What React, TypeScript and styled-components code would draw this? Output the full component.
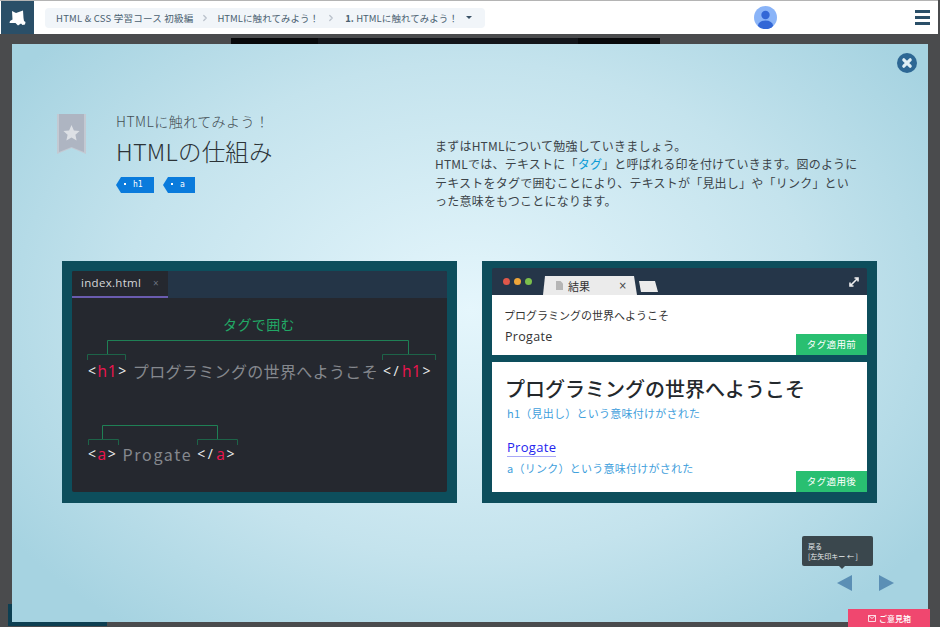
import React from "react";
import styled, { createGlobalStyle } from "styled-components";
import { ChevronRight } from "lucide-react";

const jpStack = `"Noto Sans CJK JP", "Noto Sans", sans-serif`;

const GlobalStyle = createGlobalStyle`
  html, body {
    margin: 0;
    padding: 0;
    background: #4a4b4d;
  }
  * {
    box-sizing: border-box;
  }
`;

const Page = styled.div`
  position: relative;
  width: 940px;
  height: 627px;
  overflow: hidden;
  display: flex;
  flex-direction: column;
  font-family: ${jpStack};
  background: #4a4b4d;
`;

const Header = styled.header`
  flex: 0 0 34px;
  display: flex;
  align-items: center;
  background: #fff;
  border-top: 1px solid #b4b4b4;
  margin-right: 2px;
  padding-left: 1px;
`;

const LogoBox = styled.div`
  width: 33px;
  height: 33px;
  background: #2a4f68;
  display: flex;
  align-items: center;
  justify-content: center;
`;

const Breadcrumb = styled.nav`
  margin-left: 11px;
  width: 440px;
  height: 20px;
  background: #f1f5f9;
  border-radius: 4px;
  display: flex;
  align-items: center;
  padding-left: 11px;
  font-size: 9.5px;
  color: #4a5f70;
  white-space: nowrap;
`;

const Crumb = styled.span<{ $spacing: number }>`
  letter-spacing: ${({ $spacing }) => $spacing}px;
`;

const CrumbNumber = styled.b`
  font-weight: 700;
`;

const CrumbSeparator = styled.span<{ $right: number }>`
  display: flex;
  margin: 0 ${({ $right }) => $right}px 0 7px;
  color: #b9c1cb;
`;

const Caret = styled.span`
  margin-left: 8px;
  width: 0;
  height: 0;
  border-left: 3px solid transparent;
  border-right: 3px solid transparent;
  border-top: 3px solid #3a5266;
`;

const HeaderSpacer = styled.div`
  flex: 1;
`;

const AvatarIcon = styled.svg`
  width: 23px;
  height: 23px;
  margin-right: 138px;
`;

const Hamburger = styled.div`
  display: flex;
  flex-direction: column;
  gap: 3px;
  width: 15px;
  margin-right: 8px;
  span {
    height: 3px;
    background: #2a4f68;
  }
`;

const Backdrop = styled.div`
  flex: 1;
  position: relative;
  padding: 10px 12px 5px 12px;
  background: #4a4b4d;
`;

const GhostVideo = styled.div`
  position: absolute;
  left: 231px;
  top: 4px;
  width: 429px;
  height: 6px;
  background: linear-gradient(90deg, #08090b 0 87px, #14161b 87px 347px, #08090b 347px);
`;

const GhostBar = styled.div`
  position: absolute;
  left: 8px;
  bottom: 1px;
  width: 99px;
  height: 22px;
  background: #0d3f52;
`;

const Modal = styled.main`
  position: relative;
  height: 100%;
  padding: 70px 50px 0 45px;
  background: radial-gradient(ellipse 560px 400px at 50% 46%, #e5f6fc 0%, #c4e3ed 62%, #a6d3e1 100%);
`;

const Intro = styled.section`
  height: 147px;
  display: flex;
`;

const Ribbon = styled.svg`
  flex: 0 0 29px;
  width: 29px;
  height: 40px;
`;

const TitleBlock = styled.div`
  width: 319px;
  margin-left: 30px;
`;

const Subtitle = styled.div`
  font-size: 14px;
  line-height: 16px;
  margin-top: -1px;
  letter-spacing: 0.45px;
  color: #444f55;
  font-weight: 300;
`;

const Title = styled.h1`
  margin: 7px 0 0;
  font-size: 23.5px;
  line-height: 30px;
  letter-spacing: 0.2px;
  font-weight: 300;
  color: #2c3337;
`;

const TagRow = styled.div`
  display: flex;
  gap: 9px;
  margin-top: 11px;
`;

const Tag = styled.span<{ $width: number }>`
  width: ${({ $width }) => $width}px;
  height: 16px;
  background: #0a7bdc;
  clip-path: polygon(5px 0, 100% 0, 100% 100%, 5px 100%, 0 50%);
  color: #fff;
  font-size: 8px;
  line-height: 16px;
  font-family: "DejaVu Sans Mono", monospace;
  padding-left: 8px;
  white-space: pre;
`;

const TagDot = styled.i`
  display: inline-block;
  width: 2px;
  height: 2px;
  margin: 0 7px 2px 0;
  background: #fff;
`;

const Description = styled.p`
  margin: 23px 0 0;
  width: 430px;
  font-size: 12px;
  line-height: 18.4px;
  letter-spacing: 0.22px;
  color: #3c4449;
`;

const Highlight = styled.span`
  color: #0a9bd6;
`;

const Panels = styled.section`
  display: flex;
  gap: 25px;
  margin-left: 5px;
`;

const Panel = styled.div<{ $top: number }>`
  flex: 0 0 395px;
  height: 242px;
  background: #0d4e5c;
  padding: ${({ $top }) => $top}px 10px 11px;
  display: flex;
  flex-direction: column;
`;

const Editor = styled.div`
  flex: 1;
  background: #25282f;
  display: flex;
  flex-direction: column;
  border-radius: 2px;
  overflow: hidden;
`;

const EditorTabs = styled.div`
  height: 27px;
  background: #243547;
  display: flex;
`;

const EditorTab = styled.div`
  width: 96px;
  background: #25282f;
  border-bottom: 2px solid #6a5cb0;
  display: flex;
  align-items: center;
  justify-content: space-between;
  padding: 0 9px 2px 9px;
  font-family: "Open Sans", sans-serif;
  font-size: 11.5px;
  letter-spacing: 0.3px;
  color: #d5d7da;
  span {
    color: #6b7280;
    font-size: 10px;
  }
`;

const EditorBody = styled.div`
  flex: 1;
  padding-top: 17px;
`;

const GreenCaption = styled.div`
  text-align: center;
  font-size: 14px;
  line-height: 18px;
  color: #22a866;
  letter-spacing: 0.4px;
  margin-right: 1px;
`;

const Brackets = styled.svg`
  display: block;
  width: 375px;
  height: 30px;
`;

const CodeLine = styled.div<{ $mt: number; $mb?: number }>`
  display: flex;
  align-items: center;
  height: 22px;
  padding-left: 16px;
  font-family: "Open Sans", sans-serif;
  font-size: 15px;
  line-height: 22px;
  white-space: nowrap;
  margin-top: ${({ $mt }) => $mt}px;
  margin-bottom: ${({ $mb }) => $mb || 0}px;
`;

const Angle = styled.span<{ $spacing?: number }>`
  color: #eeeeee;
  font-size: 14px;
  letter-spacing: ${({ $spacing }) => $spacing ?? 0.6}px;
`;

const TagName = styled.span`
  color: #f01450;
  font-size: 15.5px;
  letter-spacing: 0.6px;
  margin: 0 1px;
`;

const CodeText = styled.span<{ $ml: number; $mr: number; $spacing: number }>`
  color: #85888e;
  font-family: ${jpStack};
  font-size: 16px;
  margin-left: ${({ $ml }) => $ml}px;
  margin-right: ${({ $mr }) => $mr}px;
  letter-spacing: ${({ $spacing }) => $spacing}px;
`;

const BrowserBar = styled.div`
  flex: 0 0 27px;
  background: #253649;
  display: flex;
  align-items: flex-end;
  border-radius: 2px 2px 0 0;
  position: relative;
`;

const Dots = styled.div`
  display: flex;
  gap: 4px;
  margin: 0 0 10px 11px;
`;

const Dot = styled.i<{ $color: string }>`
  width: 7px;
  height: 7px;
  border-radius: 50%;
  background: ${({ $color }) => $color};
`;

const BrowserTab = styled.div`
  width: 94px;
  height: 19px;
  margin-left: 11px;
  background: #ebebeb;
  clip-path: polygon(2px 0, 91px 0, 94px 100%, 0 100%);
  display: flex;
  align-items: center;
  padding: 0 10px 0 13px;
  font-size: 11px;
  color: #333;
`;

const TabTitle = styled.span`
  margin-left: 5px;
  flex: 1;
`;

const TabClose = styled.span`
  font-size: 10px;
  font-family: "DejaVu Sans", sans-serif;
  color: #444;
`;

const NewTab = styled.div`
  width: 20px;
  height: 11px;
  margin: 0 0 3px 1px;
  background: #ebebeb;
  clip-path: polygon(1px 0, 17px 0, 20px 100%, 3px 100%);
`;

const ExpandIcon = styled.svg`
  position: absolute;
  right: 8px;
  top: 9px;
  width: 10px;
  height: 10px;
`;

const Result = styled.div<{ $height: number; $pad: string }>`
  position: relative;
  height: ${({ $height }) => $height}px;
  background: #fff;
  padding: ${({ $pad }) => $pad};
`;

const ResultGap = styled.div`
  flex: 0 0 7px;
`;

const PlainLine = styled.div`
  font-size: 11px;
  line-height: 16px;
  color: #333;
`;

const PlainLink = styled.div`
  margin: 6px 0 0 1px;
  font-family: "Open Sans", sans-serif;
  font-size: 12.5px;
  line-height: 16px;
  letter-spacing: 0.3px;
  color: #333;
`;

const ResultHeading = styled.div`
  font-size: 20px;
  line-height: 28px;
  font-weight: 500;
  color: #23282c;
`;

const Meaning = styled.div<{ $mt: number }>`
  margin: ${({ $mt }) => $mt}px 0 0 2px;
  font-size: 11px;
  line-height: 14px;
  letter-spacing: 0.25px;
  color: #3fa0dc;
`;

const ResultLink = styled.a`
  display: inline-block;
  margin: 18px 0 0 2px;
  font-family: "Open Sans", sans-serif;
  font-size: 13px;
  line-height: 18px;
  letter-spacing: 0.3px;
  color: #2424ee;
  border-bottom: 1px solid #a9a9f7;
`;

const StateLabel = styled.div`
  position: absolute;
  right: 0;
  bottom: 0;
  width: 71px;
  height: 21px;
  background: #29bf71;
  color: #fff;
  font-size: 9.5px;
  line-height: 21px;
  text-align: center;
  letter-spacing: 0.4px;
`;

const CloseButton = styled.svg`
  position: absolute;
  right: 11px;
  top: 9px;
  width: 20px;
  height: 20px;
`;

const Tooltip = styled.div`
  position: absolute;
  left: 802px;
  top: 502px;
  width: 71px;
  height: 30px;
  border-radius: 2px;
  background: #3a474d;
  color: #e8ecee;
  font-size: 7px;
  line-height: 10px;
  padding: 5px 6px;
  white-space: nowrap;
  &::after {
    content: "";
    position: absolute;
    left: 37px;
    bottom: -3px;
    border-left: 3px solid transparent;
    border-right: 3px solid transparent;
    border-top: 3px solid #3a474d;
  }
`;

const Arrow = styled.i<{ $left: number; $dir: "left" | "right" }>`
  position: absolute;
  left: ${({ $left }) => $left}px;
  top: 541px;
  width: 0;
  height: 0;
  border-top: 8px solid transparent;
  border-bottom: 8px solid transparent;
  ${({ $dir }) =>
    $dir === "left" ? "border-right: 15px solid #5b8fb5;" : "border-left: 15px solid #5b8fb5;"}
`;

const Feedback = styled.div`
  position: absolute;
  right: 10px;
  bottom: 0;
  width: 82px;
  height: 18px;
  background: #f0476f;
  color: #fff;
  font-size: 8px;
  font-weight: 500;
  display: flex;
  align-items: center;
  justify-content: center;
  gap: 3px;
  padding-left: 1px;
`;

const MailIcon = styled.svg`
  width: 8px;
  height: 7px;
`;

// outer span brighter, small tag brackets a bit darker
const BracketPaths: React.FC<{ outer: string; inner: string }> = ({ outer, inner }) => (
  <>
    <path d={outer} fill="none" stroke="#1f8055" strokeWidth="1" />
    <path d={inner} fill="none" stroke="#1d6348" strokeWidth="1" />
  </>
);

const App: React.FC = () => {
  return (
    <Page>
      <GlobalStyle />
      <Header>
        <LogoBox>
          <svg width="17" height="16" viewBox="0 0 17 16">
            <path
              d="M3 1 L7 3 L14 0.5 L14.5 8 L15 11 L16.5 12 L16 14.5 L13.5 15 L12 13.5 L9 15.5 L6.5 13 L0.5 13 L1 11 L3.5 9.5 Z"
              fill="#fff"
            />
          </svg>
        </LogoBox>
        <Breadcrumb>
          <Crumb $spacing={0.22}>HTML &amp; CSS 学習コース 初級編</Crumb>
          <CrumbSeparator $right={7}>
            <ChevronRight size={10} strokeWidth={3} />
          </CrumbSeparator>
          <Crumb $spacing={0.05}>HTMLに触れてみよう！</Crumb>
          <CrumbSeparator $right={9}>
            <ChevronRight size={10} strokeWidth={3} />
          </CrumbSeparator>
          <Crumb $spacing={0.05}>
            <CrumbNumber>1.</CrumbNumber> HTMLに触れてみよう！
          </Crumb>
          <Caret />
        </Breadcrumb>
        <HeaderSpacer />
        <AvatarIcon viewBox="0 0 23 23">
          <defs>
            <clipPath id="avatar-clip">
              <circle cx="11.5" cy="11.5" r="11.5" />
            </clipPath>
          </defs>
          <circle cx="11.5" cy="11.5" r="11.5" fill="#8ab4f8" />
          <circle cx="11.5" cy="9" r="4.2" fill="#3367d6" />
          <ellipse cx="11.5" cy="19.5" rx="7.5" ry="5" fill="#3367d6" clipPath="url(#avatar-clip)" />
        </AvatarIcon>
        <Hamburger>
          <span />
          <span />
          <span />
        </Hamburger>
      </Header>

      <Backdrop>
        <GhostVideo />
        <GhostBar />
        <Modal>
          <CloseButton viewBox="0 0 20 20">
            <circle cx="10" cy="10" r="10" fill="#2d6794" />
            <path d="M6.8 6.8 L13.2 13.2 M13.2 6.8 L6.8 13.2" stroke="#dfeef5" strokeWidth="3.2" strokeLinecap="round" />
          </CloseButton>

          <Intro>
            <Ribbon viewBox="0 0 29 40">
              <path d="M0 0 H29 V40 L14.5 34 L0 40 Z" fill="#c3c9d2" />
              <path d="M2 0 H27 V38 L14.5 33 L2 38 Z" fill="#aeb5c2" />
              <path
                d="M14.5 11 L16.9 16.4 L22.6 17 L18.4 20.8 L19.6 26.5 L14.5 23.6 L9.4 26.5 L10.6 20.8 L6.4 17 L12.1 16.4 Z"
                fill="#dde0e5"
              />
            </Ribbon>
            <TitleBlock>
              <Subtitle>HTMLに触れてみよう！</Subtitle>
              <Title>HTMLの仕組み</Title>
              <TagRow>
                <Tag $width={38}>
                  <TagDot />
                  h1
                </Tag>
                <Tag $width={32}>
                  <TagDot />
                  a
                </Tag>
              </TagRow>
            </TitleBlock>
            <Description>
              まずはHTMLについて勉強していきましょう。
              <br />
              HTMLでは、テキストに「<Highlight>タグ</Highlight>」と呼ばれる印を付けていきます。図のように
              <br />
              テキストをタグで囲むことにより、テキストが「見出し」や「リンク」とい
              <br />
              った意味をもつことになります。
            </Description>
          </Intro>

          <Panels>
            <Panel $top={10}>
              <Editor>
                <EditorTabs>
                  <EditorTab>
                    index.html <span>×</span>
                  </EditorTab>
                </EditorTabs>
                <EditorBody>
                  <GreenCaption>タグで囲む</GreenCaption>
                  <Brackets viewBox="0 0 375 30">
                    <BracketPaths
                      outer="M35.5 21 V7.5 H336.5 V21"
                      inner="M15.5 27 V21.5 H53.5 V27 M310.5 27 V21.5 H363.5 V27"
                    />
                  </Brackets>
                  <CodeLine $mt={-3} $mb={36}>
                    <Angle>&lt;</Angle>
                    <TagName>h1</TagName>
                    <Angle>&gt;</Angle>
                    <CodeText $ml={6} $mr={5} $spacing={0.35}>
                      プログラミングの世界へようこそ
                    </CodeText>
                    <Angle $spacing={2.4}>&lt;/</Angle>
                    <TagName>h1</TagName>
                    <Angle>&gt;</Angle>
                  </CodeLine>
                  <Brackets viewBox="0 0 375 30">
                    <BracketPaths
                      outer="M30.5 21 V7.5 H145.5 V21"
                      inner="M16.5 27 V21.5 H46.5 V27 M125.5 27 V21.5 H165.5 V27"
                    />
                  </Brackets>
                  <CodeLine $mt={-5}>
                    <Angle>&lt;</Angle>
                    <TagName>a</TagName>
                    <Angle>&gt;</Angle>
                    <CodeText $ml={6} $mr={5} $spacing={1.7}>
                      Progate
                    </CodeText>
                    <Angle $spacing={2.4}>&lt;/</Angle>
                    <TagName>a</TagName>
                    <Angle>&gt;</Angle>
                  </CodeLine>
                </EditorBody>
              </Editor>
            </Panel>

            <Panel $top={7}>
              <BrowserBar>
                <Dots>
                  <Dot $color="#e0574a" />
                  <Dot $color="#eea63a" />
                  <Dot $color="#7cc04c" />
                </Dots>
                <BrowserTab>
                  <svg width="7" height="9" viewBox="0 0 7 9">
                    <path d="M0 0 H4.5 L7 2.5 V9 H0 Z" fill="#b5b5b5" />
                  </svg>
                  <TabTitle>結果</TabTitle>
                  <TabClose>×</TabClose>
                </BrowserTab>
                <NewTab />
                <ExpandIcon viewBox="0 0 10 10">
                  <path
                    d="M2 8 L8 2 M5.5 1 H9 V4.5 M1 5.5 V9 H4.5"
                    fill="none"
                    stroke="#f0f0f0"
                    strokeWidth="1.6"
                  />
                </ExpandIcon>
              </BrowserBar>
              <Result $height={60} $pad="12px 12px 0 12px">
                <PlainLine>プログラミングの世界へようこそ</PlainLine>
                <PlainLink>Progate</PlainLink>
                <StateLabel>タグ適用前</StateLabel>
              </Result>
              <ResultGap />
              <Result $height={130} $pad="13px 12px 0 13px">
                <ResultHeading>プログラミングの世界へようこそ</ResultHeading>
                <Meaning $mt={3}>h1（見出し）という意味付けがされた</Meaning>
                <ResultLink>Progate</ResultLink>
                <Meaning $mt={4}>a（リンク）という意味付けがされた</Meaning>
                <StateLabel>タグ適用後</StateLabel>
              </Result>
            </Panel>
          </Panels>
        </Modal>
        <Tooltip>
          戻る
          <br />
          [左矢印キー ← ]
        </Tooltip>
        <Arrow $dir="left" $left={837} />
        <Arrow $dir="right" $left={879} />
        <Feedback>
          <MailIcon viewBox="0 0 8 7">
            <path d="M0.5 0.5 H7.5 V6.5 H0.5 Z M0.5 0.5 L4 3.5 L7.5 0.5" fill="none" stroke="#fff" strokeWidth="0.8" />
          </MailIcon>
          ご意見箱
        </Feedback>
      </Backdrop>
    </Page>
  );
};

export default App;
